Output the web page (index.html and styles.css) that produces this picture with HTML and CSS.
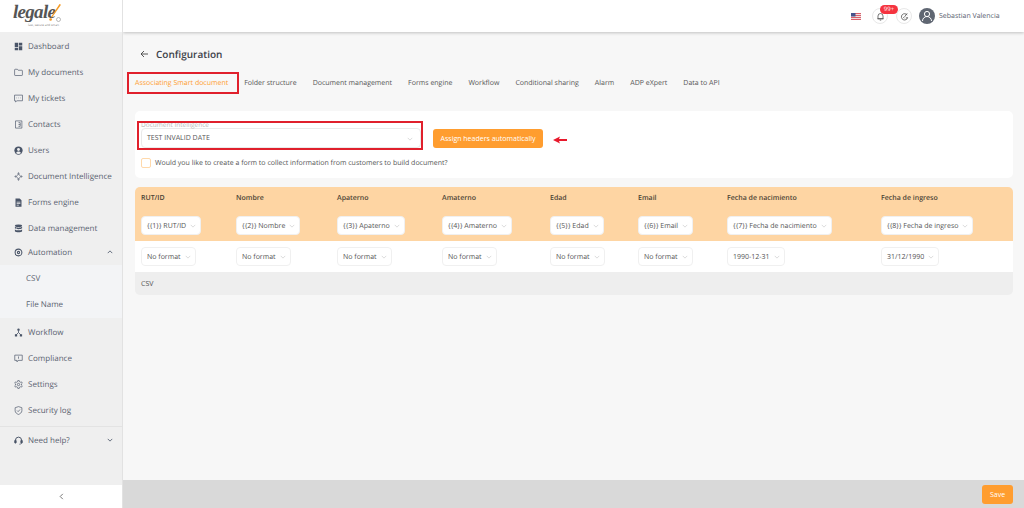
FILE: index.html
```html
<!DOCTYPE html>
<html lang="en">
<head>
    <meta charset="UTF-8">
    <meta name="viewport" content="width=device-width, initial-scale=1.0">
    <title>Configuration</title>
    <link rel="stylesheet" href="styles.css">
</head>
<body>
    <!-- Sidebar -->
    <aside class="sidebar">
        <div class="logo">
            <span class="logo-word">legale</span>
            <svg class="logo-mark" viewBox="0 0 12 18"><path d="M10.500 0 L12 .8 L3 13.500 L2 13 Z" fill="#f59a23"/><circle cx="1.600" cy="15.500" r="1.300" fill="#f59a23"/><circle cx="9.500" cy="15.500" r="2" fill="none" stroke="#777" stroke-width=".5"/></svg>
            <span class="logo-tag">fast, secure and smart</span>
        </div>
        <nav class="nav">
            <a class="nav-item"><svg class="nav-icon" viewBox="0 0 12 12"><path fill="#4a5568" d="M1 1h4.500v6H1zM6.500 1H11v3.500H6.500zM6.500 5.500H11V11H6.500zM1 8h4.500v3H1z"/></svg>Dashboard</a>
            <a class="nav-item"><svg class="nav-icon line" viewBox="0 0 12 12"><path d="M.8 2.500q0-.8.8-.8h3l1 1.300h4.800q.8 0 .8.8v5.400q0 .8-.8.8H1.600q-.8 0-.8-.8z"/></svg>My documents</a>
            <a class="nav-item"><svg class="nav-icon line" viewBox="0 0 12 12"><path d="M.7 1.500h10.600v7.500H4l-2 1.500V9H.7z"/><path d="M3.300 5.200h.6M5.700 5.200h.6M8.100 5.200h.6"/></svg>My tickets</a>
            <a class="nav-item"><svg class="nav-icon line" viewBox="0 0 12 12"><path d="M2 1.200h8.500v9.600H2z"/><path d="M6 3.500h2.300v5H6M6 6h2.300" /></svg>Contacts</a>
            <a class="nav-item"><svg class="nav-icon" viewBox="0 0 12 12"><circle cx="6" cy="6" r="5.500" fill="#4a5568"/><circle cx="6" cy="4.700" r="1.900" fill="#efefef"/><path d="M2.700 9.300a3.800 3.800 0 0 1 6.600 0 4.500 4.500 0 0 1-6.600 0z" fill="#efefef"/></svg>Users</a>
            <a class="nav-item"><svg class="nav-icon line" viewBox="0 0 12 12"><path d="M6 2.500 9 6 6 9.500 3 6z"/><circle cx="6" cy="1.800" r=".8"/><circle cx="10" cy="6" r=".8"/><circle cx="2" cy="6" r=".8"/><circle cx="6" cy="10.200" r=".8"/></svg>Document Intelligence</a>
            <a class="nav-item"><svg class="nav-icon" viewBox="0 0 12 12"><path fill="#4a5568" fill-rule="evenodd" d="M2 .5h5.500L10 3v8.500H2zM3.500 5v1h5V5zM3.500 7v1h5V7zM3.500 9v1h3V9z"/></svg>Forms engine</a>
            <a class="nav-item"><svg class="nav-icon" viewBox="0 0 12 12"><ellipse cx="6" cy="2.300" rx="4.800" ry="1.800" fill="#4a5568"/><path fill="#4a5568" d="M1.200 3.800c1 1.500 8.600 1.500 9.600 0v2c-1 1.500-8.600 1.500-9.600 0zM1.200 7.200c1 1.500 8.600 1.500 9.600 0v2.300c-1 2-8.600 2-9.600 0z"/></svg>Data management</a>
            <a class="nav-item open"><svg class="nav-icon line" viewBox="0 0 12 12"><circle cx="6" cy="6" r="4.500" stroke-width="1.400"/><circle cx="6" cy="6" r="1.500" stroke-width="1.400"/></svg>Automation<svg class="nav-chevron" viewBox="0 0 8 5"><path d="M1 4l3-3 3 3"/></svg></a>
            <div class="sub-list">
                <a class="sub-item">CSV</a>
                <a class="sub-item">File Name</a>
            </div>
            <a class="nav-item"><svg class="nav-icon" viewBox="0 0 12 12"><path fill="none" stroke="#4a5568" stroke-width="1.100" d="M6 3v3M6 6 3 9M6 6l3 3"/><circle cx="6" cy="2.200" r="1.600" fill="#4a5568"/><rect x="1.200" y="8.300" width="3" height="3" fill="#4a5568"/><rect x="7.800" y="8.300" width="3" height="3" fill="#4a5568"/></svg>Workflow</a>
            <a class="nav-item"><svg class="nav-icon line" viewBox="0 0 12 12"><path d="M1 1.500h10v7H5.500L4 10.500V8.500H1z"/><path d="M6 3.300v3"/></svg>Compliance</a>
            <a class="nav-item"><svg class="nav-icon line" viewBox="0 0 12 12"><path d="M5 .8h2l.3 1.500 1.300.7 1.400-.5 1 1.700-1.100 1 0 1.600 1.100 1-1 1.700-1.400-.5-1.300.7L7 11.200H5l-.3-1.500-1.300-.7-1.400.5-1-1.700 1.100-1 0-1.600-1.100-1 1-1.700 1.400.5 1.300-.7z"/><circle cx="6" cy="6" r="1.600"/></svg>Settings</a>
            <a class="nav-item"><svg class="nav-icon line" viewBox="0 0 12 12"><path d="M6 .8 10.500 2.300v4c0 2.500-2.200 4-4.500 5-2.300-1-4.500-2.500-4.500-5v-4z"/><path d="M4 6l1.500 1.500L8 4.700"/></svg>Security log</a>
            <div class="nav-divider"></div>
            <a class="nav-item"><svg class="nav-icon line" viewBox="0 0 12 12"><path d="M2 7V5.500a4 4 0 0 1 8 0V7" stroke-width="1.300"/><rect x=".8" y="5.500" width="2.200" height="4" rx="1" fill="#4a5568"/><rect x="9" y="5.500" width="2.200" height="4" rx="1" fill="#4a5568"/><path d="M10 9.500q0 1.500-3 1.500"/></svg>Need help?<svg class="nav-chevron" viewBox="0 0 8 5"><path d="M1 1l3 3 3-3"/></svg></a>
        </nav>
        <div class="collapse"><svg viewBox="0 0 5 8"><path d="M4 1 1 4l3 3"/></svg></div>
    </aside>

    <div class="main">
        <!-- Top bar -->
        <header class="topbar">
            <svg class="flag" viewBox="0 0 10 7"><rect width="10" height="7" fill="#f1dfe0"/><path fill="#d9606b" d="M0 0h10v1H0zM0 2h10v1H0zM0 4h10v1H0zM0 6h10v1H0z"/><rect width="4.500" height="3.500" fill="#46548c"/></svg>
            <div class="round-btn bell">
                <svg viewBox="0 0 10 10"><path d="M2.200 7.500V4.500a2.800 2.800 0 0 1 5.600 0v3zM1.500 7.500h7M4.200 9h1.600"/></svg>
                <span class="badge">99+</span>
            </div>
            <div class="round-btn">
                <svg viewBox="0 0 10 10"><path d="M8 3.500A3.500 3.500 0 1 0 8.500 6M3.500 5.500 5 7M5 5.500l3-4M6.500 6.500h2"/></svg>
            </div>
            <div class="avatar"><svg viewBox="0 0 16 16"><circle cx="8" cy="6" r="2.600"/><path d="M3.500 13a4.500 4.500 0 0 1 9 0"/></svg></div>
            <span class="user-name">Sebastian Valencia</span>
        </header>

        <main class="content">
            <div class="page-title">
                <svg class="back" viewBox="0 0 9 8"><path d="M8 4H1M4 1 1 4l3 3"/></svg>
                <h1>Configuration</h1>
            </div>

            <div class="tabs">
                <a class="tab active">Associating Smart document</a>
                <a class="tab">Folder structure</a>
                <a class="tab">Document management</a>
                <a class="tab">Forms engine</a>
                <a class="tab">Workflow</a>
                <a class="tab">Conditional sharing</a>
                <a class="tab">Alarm</a>
                <a class="tab">ADP eXpert</a>
                <a class="tab">Data to API</a>
            </div>

            <section class="card">
                <div class="card-row">
                    <div class="field">
                        <span class="field-label">Document Intelligence</span>
                        <div class="field-select">TEST INVALID DATE<svg class="chevron" viewBox="0 0 8 5"><path d="M1 1l3 3 3-3"/></svg></div>
                    </div>
                    <button class="btn">Assign headers automatically</button>
                    <svg class="red-arrow" viewBox="0 0 14 8"><path d="M0 4 7 .5 6 3h8v2H6l1 2.500z"/></svg>
                </div>
                <label class="check-row"><span class="checkbox"></span>Would you like to create a form to collect information from customers to build document?</label>
            </section>

            <section class="table">
                <div class="table-row head">
                    <div class="cell"><div class="col-name">RUT/ID</div><div class="pick">{{1}} RUT/ID<svg class="chevron" viewBox="0 0 8 5"><path d="M1 1l3 3 3-3"/></svg></div></div>
                    <div class="cell"><div class="col-name">Nombre</div><div class="pick">{{2}} Nombre<svg class="chevron" viewBox="0 0 8 5"><path d="M1 1l3 3 3-3"/></svg></div></div>
                    <div class="cell"><div class="col-name">Apaterno</div><div class="pick">{{3}} Apaterno<svg class="chevron" viewBox="0 0 8 5"><path d="M1 1l3 3 3-3"/></svg></div></div>
                    <div class="cell"><div class="col-name">Amaterno</div><div class="pick">{{4}} Amaterno<svg class="chevron" viewBox="0 0 8 5"><path d="M1 1l3 3 3-3"/></svg></div></div>
                    <div class="cell"><div class="col-name">Edad</div><div class="pick">{{5}} Edad<svg class="chevron" viewBox="0 0 8 5"><path d="M1 1l3 3 3-3"/></svg></div></div>
                    <div class="cell"><div class="col-name">Email</div><div class="pick">{{6}} Email<svg class="chevron" viewBox="0 0 8 5"><path d="M1 1l3 3 3-3"/></svg></div></div>
                    <div class="cell"><div class="col-name">Fecha de nacimiento</div><div class="pick">{{7}} Fecha de nacimiento<svg class="chevron" viewBox="0 0 8 5"><path d="M1 1l3 3 3-3"/></svg></div></div>
                    <div class="cell"><div class="col-name">Fecha de ingreso</div><div class="pick">{{8}} Fecha de ingreso<svg class="chevron" viewBox="0 0 8 5"><path d="M1 1l3 3 3-3"/></svg></div></div>
                </div>
                <div class="table-row formats">
                    <div class="cell"><div class="pick">No format<svg class="chevron" viewBox="0 0 8 5"><path d="M1 1l3 3 3-3"/></svg></div></div>
                    <div class="cell"><div class="pick">No format<svg class="chevron" viewBox="0 0 8 5"><path d="M1 1l3 3 3-3"/></svg></div></div>
                    <div class="cell"><div class="pick">No format<svg class="chevron" viewBox="0 0 8 5"><path d="M1 1l3 3 3-3"/></svg></div></div>
                    <div class="cell"><div class="pick">No format<svg class="chevron" viewBox="0 0 8 5"><path d="M1 1l3 3 3-3"/></svg></div></div>
                    <div class="cell"><div class="pick">No format<svg class="chevron" viewBox="0 0 8 5"><path d="M1 1l3 3 3-3"/></svg></div></div>
                    <div class="cell"><div class="pick">No format<svg class="chevron" viewBox="0 0 8 5"><path d="M1 1l3 3 3-3"/></svg></div></div>
                    <div class="cell"><div class="pick">1990-12-31<svg class="chevron" viewBox="0 0 8 5"><path d="M1 1l3 3 3-3"/></svg></div></div>
                    <div class="cell"><div class="pick">31/12/1990<svg class="chevron" viewBox="0 0 8 5"><path d="M1 1l3 3 3-3"/></svg></div></div>
                </div>
                <div class="table-foot">CSV</div>
            </section>
        </main>

        <footer class="footer">
            <button class="btn save">Save</button>
        </footer>
    </div>

    <!-- Annotation boxes from the screenshot -->
    <div class="red-box tab-box"></div>
    <div class="red-box select-box"></div>
</body>
</html>
```

FILE: styles.css
```css
* {
    box-sizing: border-box;
}

body {
    font-family: "Open Sans", sans-serif;
    font-size: 7px;
    margin: 0;
    padding: 0;
    height: 508px;
    display: flex;
    overflow: hidden;
    background-color: #f7f7f7;
    color: #4a4f57;
    text-rendering: geometricPrecision;
}

/* Sidebar */
.sidebar {
    width: 123px;
    flex-shrink: 0;
    display: flex;
    flex-direction: column;
    background-color: #efefef;
    border-right: 1px solid #e2e2e2;
    z-index: 2;
}

.logo {
    height: 32px;
    background-color: #fff;
    position: relative;
    flex-shrink: 0;
}

.logo-word {
    position: absolute;
    left: 13px;
    top: 2px;
    font-family: "Liberation Serif", serif;
    font-style: italic;
    font-weight: bold;
    font-size: 19px;
    letter-spacing: -0.7px;
    color: #555;
}

.logo-mark {
    position: absolute;
    left: 49px;
    top: 4px;
    width: 12px;
    height: 18px;
}

.logo-tag {
    position: absolute;
    left: 28px;
    top: 23px;
    font-size: 3px;
    white-space: nowrap;
    color: #777;
}

.nav {
    flex: 1;
    padding-top: 1px;
}

.nav-item {
    height: 26px;
    display: flex;
    align-items: center;
    padding-left: 14px;
    padding-right: 9px;
    font-size: 8px;
    white-space: nowrap;
    color: #5a6270;
}

.nav-item.open {
    height: 24px;
    padding-bottom: 2px;
}

.nav-icon {
    width: 9px;
    height: 9px;
    margin-right: 5px;
    flex-shrink: 0;
}

.line {
    fill: none;
    stroke: #4a5568;
    stroke-width: 0.9;
}

.nav-chevron {
    width: 6px;
    height: 4px;
    margin-left: auto;
    fill: none;
    stroke: #4a5568;
    stroke-width: 1.1;
}

.sub-list {
    background-color: #f3f4f6;
    margin-bottom: 1px;
    padding-bottom: 1px;
}

.sub-item {
    height: 26px;
    display: flex;
    align-items: center;
    padding-left: 26px;
    font-size: 8px;
    color: #5a6270;
}

.nav-divider {
    height: 1px;
    margin-top: 3px;
    background-color: #e3e3e3;
}

.collapse {
    height: 23px;
    background-color: #fff;
    display: flex;
    align-items: center;
    justify-content: center;
}

.collapse svg {
    width: 5px;
    height: 7px;
    fill: none;
    stroke: #666;
    stroke-width: 1;
}

/* Main column */
.main {
    flex: 1;
    min-width: 0;
    display: flex;
    flex-direction: column;
}

.topbar {
    height: 32px;
    flex-shrink: 0;
    background-color: #fff;
    box-shadow: 0 1px 3px rgba(0, 0, 0, 0.22);
    display: flex;
    align-items: center;
    padding-left: 728px;
    z-index: 1;
}

.flag {
    width: 10px;
    height: 7px;
}

.round-btn {
    width: 16px;
    height: 16px;
    margin-left: 11px;
    border: 1px solid #e8e8e8;
    border-radius: 50%;
    display: flex;
    align-items: center;
    justify-content: center;
    position: relative;
}

.round-btn + .round-btn {
    margin-left: 8px;
}

.round-btn svg {
    width: 9px;
    height: 9px;
    fill: none;
    stroke: #555;
    stroke-width: 0.9;
}

.badge {
    position: absolute;
    left: 7px;
    top: -4px;
    width: 18px;
    height: 9px;
    border-radius: 5px;
    background-color: #f5333f;
    color: #fff;
    font-size: 6px;
    line-height: 9px;
    text-align: center;
}

.avatar {
    width: 16px;
    height: 16px;
    margin-left: 7px;
    border-radius: 50%;
    background-color: #5f6672;
}

.avatar svg {
    display: block;
    fill: none;
    stroke: #fff;
    stroke-width: 1;
}

.user-name {
    margin-left: 4px;
    font-size: 7px;
    color: #5a6270;
}

.content {
    flex: 1;
    padding: 0 11px 0 12px;
}

.page-title {
    height: 43px;
    display: flex;
    align-items: center;
}

.back {
    width: 9px;
    height: 8px;
    margin-left: 5px;
    margin-right: 7px;
    fill: none;
    stroke: #444;
    stroke-width: 0.9;
}

.page-title h1 {
    margin: 0;
    font-size: 10px;
    font-weight: 600;
    color: #3d4249;
}

.tabs {
    display: flex;
    align-items: center;
    height: 14px;
    margin-top: 1px;
    padding-top: 1px;
}

.tab {
    margin-right: 16px;
    white-space: nowrap;
    color: #555;
}

.tab.active {
    color: #ff9d2f;
}

.card {
    height: 67px;
    margin-top: 21px;
    padding: 10px 6px 0;
    background-color: #fff;
    border-radius: 5px;
}

.card-row {
    display: flex;
    align-items: flex-end;
}

.field {
    width: 280px;
    position: relative;
    padding-top: 7px;
}

.field-label {
    position: absolute;
    left: 0;
    top: 0;
    font-size: 6.5px;
    color: #b8b8b8;
    line-height: 7px;
}

.field-select {
    height: 20px;
    padding: 1px 7px 0 5px;
    border: 1px solid #eaeaea;
    border-radius: 4px;
    display: flex;
    align-items: center;
    justify-content: space-between;
    color: #555;
}

.chevron {
    width: 6px;
    height: 4px;
    flex-shrink: 0;
    fill: none;
    stroke: #c4c4c4;
    stroke-width: 0.8;
}

.btn {
    border: none;
    border-radius: 3px;
    background-color: #ff9d2f;
    color: #fff;
    font-family: inherit;
    font-size: 7px;
    padding: 0;
    white-space: nowrap;
}

.card-row .btn {
    width: 110px;
    height: 19px;
    margin-left: 12px;
}

.red-arrow {
    width: 14px;
    height: 8px;
    margin-left: 10px;
    margin-bottom: 4px;
    fill: #e8192c;
}

.check-row {
    display: flex;
    align-items: center;
    margin-top: 10px;
    color: #555;
}

.checkbox {
    width: 10px;
    height: 10px;
    margin-right: 4px;
    border: 1px solid #ffd9ab;
    border-radius: 2px;
    background-color: #fff;
}

.table {
    margin-top: 9px;
    border-radius: 5px;
    overflow: hidden;
}

.table-row {
    display: grid;
    grid-template-columns: 101px 101px 105px 108px 88px 89px 154px 1fr;
}

.table-row.head {
    height: 54px;
    background-color: #fed5a3;
}

.table-row.formats {
    height: 31px;
    background-color: #fff;
    align-items: center;
}

.cell:first-child {
    padding-left: 6px;
}

.col-name {
    height: 29px;
    padding-top: 7px;
    font-size: 7px;
    font-weight: 600;
    color: #4d4436;
}

.pick {
    display: inline-flex;
    align-items: center;
    height: 19px;
    padding: 1px 4px 0 5px;
    border: 1px solid #f0f0f0;
    border-radius: 4px;
    background-color: #fff;
    white-space: nowrap;
    color: #555;
}

.pick .chevron {
    margin-left: 4px;
}

.table-foot {
    height: 23px;
    padding: 1px 0 0 6px;
    display: flex;
    align-items: center;
    background-color: #eee;
    color: #555;
}

.footer {
    height: 28px;
    flex-shrink: 0;
    background-color: #d9d9d9;
    display: flex;
    align-items: center;
    justify-content: flex-end;
    padding-right: 11px;
}

.btn.save {
    width: 31px;
    height: 19px;
}

/* Red annotations drawn over the screenshot */
.red-box {
    position: absolute;
    border: 2px solid #e0202c;
    pointer-events: none;
}

.tab-box {
    left: 127px;
    top: 72px;
    width: 112px;
    height: 22px;
}

.select-box {
    left: 137px;
    top: 121px;
    width: 286px;
    height: 29px;
}
```
